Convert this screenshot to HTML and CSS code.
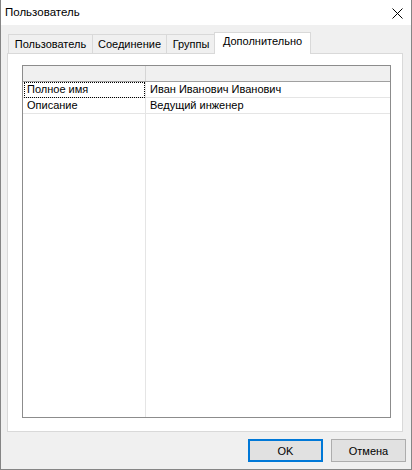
FILE: index.html
```html
<!DOCTYPE html>
<html lang="ru">
<head>
<meta charset="utf-8">
<title>Пользователь</title>
<link rel="stylesheet" href="styles.css">
</head>
<body>
<div class="window">
  <div class="titlebar">
    <span class="title">Пользователь</span>
    <svg class="close" width="11" height="11" viewBox="0 0 11 11"><path d="M0.5 0.5 L10.5 10.5 M10.5 0.5 L0.5 10.5" stroke="#000" stroke-width="1" fill="none"/></svg>
  </div>
  <div class="content">
    <div class="tabs">
      <div class="tab t1">Пользователь</div>
      <div class="tab t2">Соединение</div>
      <div class="tab t3">Группы</div>
      <div class="tab t4 active">Дополнительно</div>
    </div>
    <div class="panel">
      <div class="list">
        <div class="row header"><div class="cell c1"></div><div class="cell c2"></div></div>
        <div class="row"><div class="cell c1 focus">Полное имя</div><div class="cell c2">Иван Иванович Иванович</div></div>
        <div class="row"><div class="cell c1">Описание</div><div class="cell c2">Ведущий инженер</div></div>
        <div class="filler"><div class="cell c1"></div><div class="cell c2"></div></div>
      </div>
    </div>
    <div class="buttons">
      <button class="btn default">OK</button>
      <button class="btn">Отмена</button>
    </div>
  </div>
</div>
</body>
</html>
```
FILE: styles.css
```css
* { box-sizing: border-box; }
html, body { margin: 0; padding: 0; background: #fff; }
body {
  font-family: "Liberation Sans", Arial, sans-serif;
  font-size: 11px;
  color: #000;
}
.window {
  width: 412px;
  height: 470px;
  background: #f0f0f0;
  border-left: 1px solid #858585;
  border-right: 1px solid #858585;
  border-bottom: 1px solid #858585;
  display: flex;
  flex-direction: column;
}
.titlebar {
  height: 25px;
  flex: none;
  background: #fff;
  display: flex;
  align-items: center;
  padding-left: 4px;
}
.title { font-size: 11.5px; line-height: 15px; margin-top: -1px; }
.close {
  margin-left: auto;
  margin-right: 8px;
  align-self: flex-start;
  margin-top: 8px;
}
.content {
  flex: 1;
  display: flex;
  flex-direction: column;
  padding: 7px 5px 0 6px;
}
.tabs {
  height: 21px;
  flex: none;
  display: flex;
  align-items: flex-end;
  padding-left: 1px;
  margin-right: 3px;
}
.tab {
  height: 19px;
  border: 1px solid #d9d9d9;
  border-bottom: none;
  background: #f0f0f0;
  text-align: center;
  line-height: 18px;
  white-space: nowrap;
  font-size: 11px;
}
.t1 { width: 85px; }
.t2 { width: 75px; margin-left: -1px; }
.t3 { width: 50px; margin-left: -1px; }
.t4 { width: 97px; margin-left: -2px; }
.tab.active {
  height: 22px;
  margin-bottom: -1px;
  background: #fff;
  position: relative;
  z-index: 1;
  line-height: 17px;
}
.panel {
  height: 379px;
  flex: none;
  margin-right: 3px;
  background: #fff;
  border: 1px solid #d9d9d9;
  padding: 11px 11px 13px 14px;
}
.list {
  height: 100%;
  border: 1px solid #8c8c8c;
  display: flex;
  flex-direction: column;
  background: #fff;
}
.row {
  display: flex;
  height: 16px;
  flex: none;
  border-bottom: 1px solid #e5e5e5;
}
.row.header {
  background: #f0f0f0;
  border-bottom: 1px solid #a0a0a0;
}
.row.header .c1 { border-right-color: #d5d5d5; }
.cell {
  line-height: 15px;
  padding-left: 4px;
  white-space: nowrap;
  overflow: hidden;
}
.c1 {
  width: 123px;
  flex: none;
  border-right: 1px solid #e5e5e5;
}
.c2 { flex: 1; }
.focus { position: relative; overflow: visible; }
.focus::after {
  content: "";
  position: absolute;
  left: 1px;
  top: 0;
  right: 0;
  bottom: -1px;
  border: 1px dotted #000;
}
.filler {
  flex: 1;
  display: flex;
}
.buttons {
  flex: none;
  display: flex;
  justify-content: flex-end;
  gap: 8px;
  margin-top: 7px;
}
.btn {
  width: 75px;
  height: 23px;
  background: #e1e1e1;
  border: 1px solid #adadad;
  font-family: "Liberation Sans", Arial, sans-serif;
  font-size: 11px;
  color: #000;
  padding: 0;
  margin: 0;
}
.btn.default { border: 2px solid #0078d7; }
```
